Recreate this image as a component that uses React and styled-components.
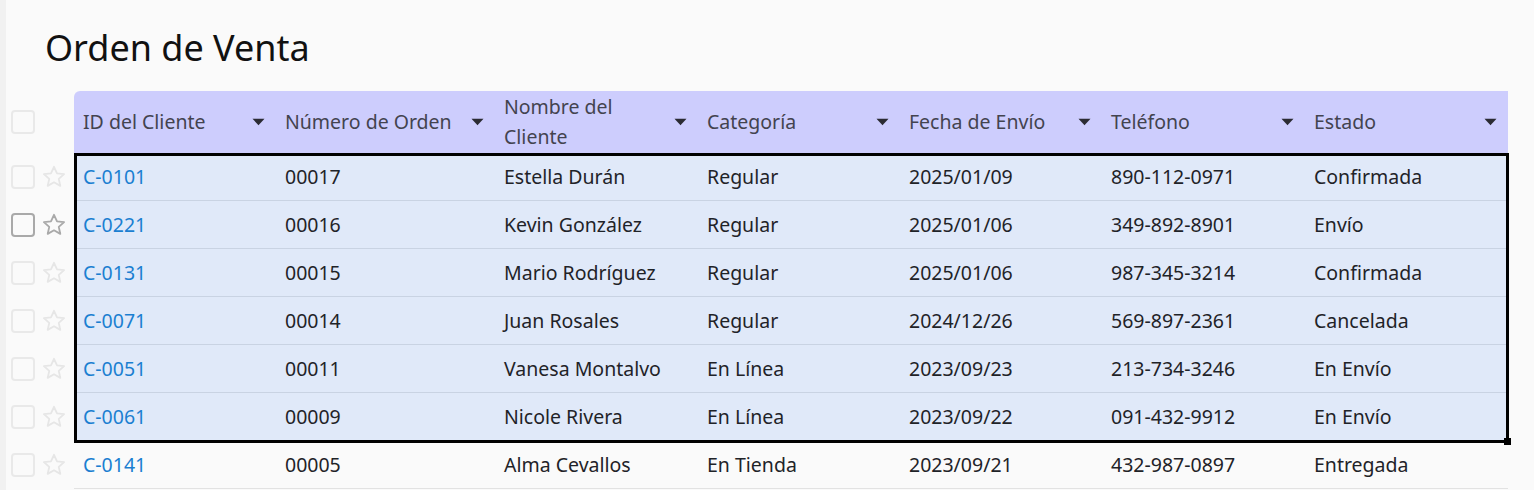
import React from 'react';
import styled, { createGlobalStyle } from 'styled-components';

const GlobalStyle = createGlobalStyle`
    html, body {
        margin: 0;
        padding: 0;
        background: #fafafa;
        font-family: "Noto Sans", "Open Sans", sans-serif;
        overflow: hidden;
    }
`;

const COLS = [
    { label: 'ID del Cliente', width: 202 },
    { label: 'Número de Orden', width: 219 },
    { label: 'Nombre del Cliente', width: 203 },
    { label: 'Categoría', width: 202 },
    { label: 'Fecha de Envío', width: 202 },
    { label: 'Teléfono', width: 203 },
    { label: 'Estado', width: 203 },
];

const ROWS = [
    ['C-0101', '00017', 'Estella Durán', 'Regular', '2025/01/09', '890-112-0971', 'Confirmada'],
    ['C-0221', '00016', 'Kevin González', 'Regular', '2025/01/06', '349-892-8901', 'Envío'],
    ['C-0131', '00015', 'Mario Rodríguez', 'Regular', '2025/01/06', '987-345-3214', 'Confirmada'],
    ['C-0071', '00014', 'Juan Rosales', 'Regular', '2024/12/26', '569-897-2361', 'Cancelada'],
    ['C-0051', '00011', 'Vanesa Montalvo', 'En Línea', '2023/09/23', '213-734-3246', 'En Envío'],
    ['C-0061', '00009', 'Nicole Rivera', 'En Línea', '2023/09/22', '091-432-9912', 'En Envío'],
    ['C-0141', '00005', 'Alma Cevallos', 'En Tienda', '2023/09/21', '432-987-0897', 'Entregada'],
];

const Page = styled.div`
    display: flex;
    height: 490px;
`;

const Gutter = styled.div`
    width: 6px;
    background: #f1f1f1;
    flex-shrink: 0;
`;

const Main = styled.div`
    flex: 1;
    padding-top: 24px;
`;

const Title = styled.h1`
    margin: 0 0 0 39px;
    font-size: 36px;
    font-weight: 400;
    color: #111;
    line-height: 48px;
    height: 67px;
`;

const Grid = styled.div`
    position: relative;
`;

const Line = styled.div`
    display: flex;
    height: ${props => props.h}px;
`;

const Controls = styled.div`
    width: 68px;
    flex-shrink: 0;
    display: flex;
    align-items: center;
    gap: 6px;
    padding-left: 5px;
    box-sizing: border-box;
`;

const Check = styled.span`
    width: 24px;
    height: 24px;
    box-sizing: border-box;
    border: 2px solid ${props => props.strong ? '#a9a9a9' : '#e9e9e9'};
    border-radius: 4px;
`;

const Table = styled.div`
    display: flex;
    width: 1434px;
    background: ${props => props.bg};
    border-bottom: ${props => props.head ? 'none' : `1px solid ${props.line}`};
    border-top-left-radius: ${props => props.head ? '6px' : '0'};
    box-sizing: border-box;
`;

const HeadCell = styled.div`
    width: ${props => props.w}px;
    flex-shrink: 0;
    display: flex;
    align-items: center;
    gap: 12px;
    padding: 0 11px 0 9px;
    box-sizing: border-box;
    font-size: 19.5px;
    line-height: 30px;
    color: #43434f;
`;

const HeadLabel = styled.span`
    flex: 1;
`;

const Cell = styled.div`
    width: ${props => props.w}px;
    flex-shrink: 0;
    display: flex;
    align-items: center;
    padding-left: 9px;
    box-sizing: border-box;
    font-size: 19.5px;
    color: ${props => props.link ? '#1b7fd1' : '#1f2328'};
`;

const Selection = styled.div`
    position: absolute;
    left: 68px;
    top: 62px;
    width: 1435px;
    height: 290px;
    border: 3px solid #000;
    box-sizing: border-box;
    pointer-events: none;
`;

const Handle = styled.div`
    position: absolute;
    right: -5px;
    bottom: -5px;
    width: 7px;
    height: 7px;
    background: #000;
`;

const Caret = () => (
    <svg width="13" height="8" viewBox="0 0 13 8">
        <path d="M0.5 0.8 L12.5 0.8 L6.5 7.2 Z" fill="#2b2b33" />
    </svg>
);

const Star = ({ color }) => (
    <svg width="26" height="26" viewBox="0 0 24 24">
        <path
            d="M12 2.6 L14.8 8.6 L21.3 9.3 L16.4 13.7 L17.8 20.2 L12 16.9 L6.2 20.2 L7.6 13.7 L2.7 9.3 L9.2 8.6 Z"
            fill="none"
            stroke={color}
            strokeWidth="1.7"
            strokeLinejoin="round"
        />
    </svg>
);

const App = () => {
    return <>
        <GlobalStyle />
        <Page>
            <Gutter />
            <Main>
                <Title>Orden de Venta</Title>
                <Grid>
                    <Line h={62}>
                        <Controls>
                            <Check />
                        </Controls>
                        <Table head bg="#cdcdfd">
                            {COLS.map(c => (
                                <HeadCell key={c.label} w={c.width}>
                                    <HeadLabel>{c.label}</HeadLabel>
                                    <Caret />
                                </HeadCell>
                            ))}
                        </Table>
                    </Line>
                    {ROWS.map((r, i) => {
                        const selected = i < 6;
                        const hover = i === 1;
                        return <Line h={48} key={r[0]}>
                            <Controls>
                                <Check strong={hover} />
                                <Star color={hover ? '#a9a9a9' : '#e6e6e6'} />
                            </Controls>
                            <Table bg={selected ? '#e0e9f9' : '#fafafa'} line={selected ? '#c9d3e3' : '#e2e2e2'}>
                                {r.map((v, j) => (
                                    <Cell key={j} w={COLS[j].width} link={j === 0}>{v}</Cell>
                                ))}
                            </Table>
                        </Line>;
                    })}
                    <Selection>
                        <Handle />
                    </Selection>
                </Grid>
            </Main>
        </Page>
    </>;
};

export default App;
